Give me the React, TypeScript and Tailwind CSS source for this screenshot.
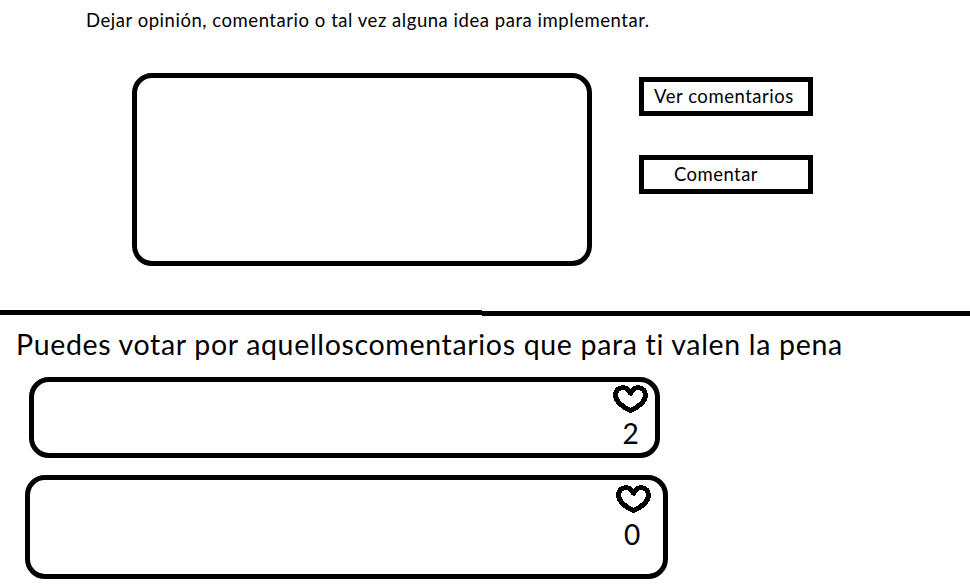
type VoteCardProps = { votes: number; className: string; voteClassName: string };

function Heart() {
  return (
    <svg width="35" height="28" viewBox="0 0 35 28" fill="none" stroke="#000" strokeWidth="5" strokeLinejoin="round" shapeRendering="crispEdges" className="block">
      <path d="M17.5 8.2C15.8 4.5 13 2.7 9.7 2.7C5.5 2.7 2.6 5.8 2.6 9.7C2.6 16.5 9.5 22.3 17.5 25.3C25.5 22.3 32.4 16.5 32.4 9.7C32.4 5.8 29.5 2.7 25.3 2.7C22 2.7 19.2 4.5 17.5 8.2Z" />
    </svg>
  );
}

function VoteCard({ votes, className, voteClassName }: VoteCardProps) {
  return (
    <div className={`flex justify-end rounded-[20px] border-[5px] border-black ${className}`}>
      <button className={`flex h-fit flex-col items-center ${voteClassName}`}>
        <Heart />
        <span className="mt-[3px] text-[28px] leading-[34px]">{votes}</span>
      </button>
    </div>
  );
}

export default function App() {
  return (
    <main className="h-[585px] w-[970px] overflow-hidden bg-white font-['Lato',sans-serif] text-black">
      <section className="h-[310px] pt-2">
        <h1 className="ml-[86px] h-6 text-[18.5px] leading-6 tracking-[0.54px] whitespace-nowrap">
          Dejar opinión, comentario o tal vez alguna idea para implementar.
        </h1>
        <div className="mt-[41px] ml-[132px] flex gap-[47px]">
          <textarea className="block h-[193px] w-[460px] resize-none rounded-[20px] border-[5px] border-black p-3 outline-none" />
          <div className="flex flex-col gap-[39px] pt-1">
            <button className="h-[39px] w-[174px] border-[5px] border-black pl-[10px] text-left text-[18.5px] leading-[29px] tracking-[0.54px] whitespace-nowrap">
              Ver comentarios
            </button>
            <button className="h-[39px] w-[174px] border-[5px] border-black pl-[30px] text-left text-[18.5px] leading-[29px] tracking-[0.45px] whitespace-nowrap">
              Comentar
            </button>
          </div>
        </div>
      </section>
      <div className="flex h-[6px]">
        <div className="h-[5px] w-[482px] bg-black" />
        <div className="mt-px h-[5px] flex-1 bg-black" />
      </div>
      <section>
        <h2 className="mt-[11px] ml-4 h-[34px] text-[28.5px] leading-[34px] tracking-[0.67px] whitespace-nowrap">
          Puedes votar por aquelloscomentarios que para ti valen la pena
        </h2>
        <VoteCard votes={2} className="mt-4 ml-[29px] h-[81px] w-[631px]" voteClassName="mt-[3px] mr-[7px]" />
        <VoteCard votes={0} className="mt-[17px] ml-[25px] h-[104px] w-[643px]" voteClassName="mt-[5px] mr-[12px] [&>span]:mt-1 [&>span]:mr-[3px]" />
      </section>
    </main>
  );
}
